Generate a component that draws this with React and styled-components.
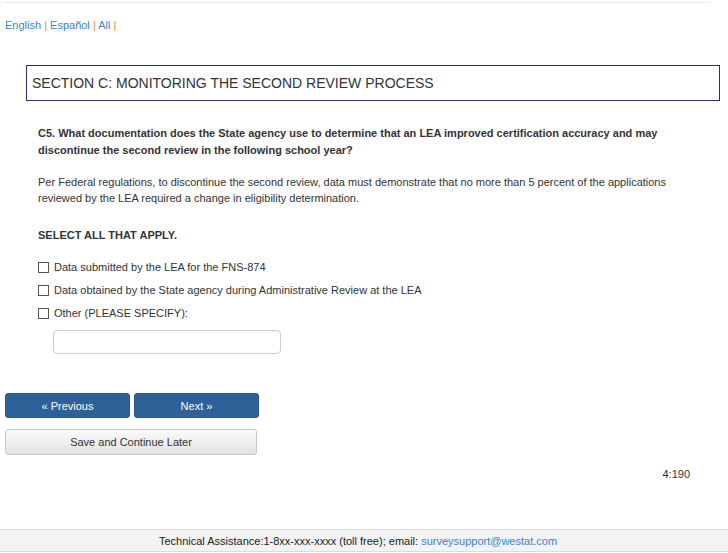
import React from "react";
import styled, { createGlobalStyle } from "styled-components";

const Global = createGlobalStyle`
  html, body { margin: 0; padding: 0; background: #fff; }
  body { font-family: "Liberation Sans", Arial, sans-serif; color: #333; font-size: 11px; }
`;

const Page = styled.div`
  width: 728px;
  height: 553px;
  display: flex;
  flex-direction: column;
  position: relative;
`;

const TopRule = styled.div`
  margin: 2px 18px 0 3px;
  height: 1px;
  background: #e8e8e8;
`;

const LangBar = styled.div`
  padding: 15px 5px 0;
  font-size: 11px;
  line-height: 14px;
  color: #e08a2e;
`;

const LangLink = styled.a`
  color: #3c82c9;
  text-decoration: none;
`;

const Content = styled.div`
  padding: 0 0 0 5px;
  flex: 1;
`;

const SectionBox = styled.div`
  margin: 33px 8px 0 21px;
  height: 34px;
  border: 1px solid #2b2d6e;
  display: flex;
  align-items: center;
  padding-left: 5px;
  font-size: 14px;
  color: #333;
`;

const Body = styled.div`
  padding: 0 0 0 33px;
`;

const Question = styled.p`
  margin: 24px 40px 0 0;
  font-weight: bold;
  font-size: 11px;
  line-height: 17px;
  color: #333;
`;

const Note = styled.p`
  margin: 15px 40px 0 0;
  font-size: 11px;
  line-height: 16px;
  color: #333;
`;

const SelectAll = styled.p`
  margin: 22px 0 0 0;
  font-weight: bold;
  font-size: 11px;
  line-height: 14px;
`;

const Options = styled.div`
  margin-top: 18px;
  display: flex;
  flex-direction: column;
  gap: 9px;
`;

const Option = styled.label`
  display: flex;
  align-items: center;
  gap: 5px;
  font-size: 11px;
  line-height: 14px;
`;

const Box = styled.span`
  width: 9px;
  height: 9px;
  border: 1px solid #555;
  background: #fff;
  display: inline-block;
`;

const SpecifyInput = styled.div`
  margin: 10px 0 0 15px;
  width: 226px;
  height: 22px;
  border: 1px solid #ccc;
  border-radius: 4px;
  background: #fff;
`;

const ButtonRow = styled.div`
  margin-top: 39px;
  display: flex;
  gap: 4px;
`;

const BlueButton = styled.div`
  width: 125px;
  height: 25px;
  box-sizing: border-box;
  background: #2d6198;
  border: 1px solid #28578a;
  border-radius: 3px;
  color: #fff;
  font-size: 11px;
  display: flex;
  align-items: center;
  justify-content: center;
`;

const SaveButton = styled.div`
  margin-top: 11px;
  width: 252px;
  height: 26px;
  box-sizing: border-box;
  border: 1px solid #c8c8c8;
  border-radius: 3px;
  background: linear-gradient(#fbfbfb, #e2e2e2);
  color: #333;
  font-size: 11px;
  display: flex;
  align-items: center;
  justify-content: center;
`;

const PageNum = styled.div`
  margin: 12px 38px 0 0;
  text-align: right;
  font-size: 11px;
  line-height: 14px;
`;

const Footer = styled.div`
  height: 21px;
  margin-bottom: 1px;
  background: #f3f3f3;
  border-top: 1px solid #dcdcdc;
  border-bottom: 1px solid #dcdcdc;
  display: flex;
  align-items: center;
  justify-content: center;
  font-size: 11px;
  color: #222;
  padding-right: 12px;
`;

const Mail = styled.a`
  color: #3c82c9;
  text-decoration: none;
`;

export default function App() {
  return (
    <>
      <Global />
      <Page>
        <TopRule />
        <LangBar>
          <LangLink>English</LangLink> | <LangLink>Español</LangLink> | <LangLink>All</LangLink> |
        </LangBar>
        <Content>
          <SectionBox>SECTION C: MONITORING THE SECOND REVIEW PROCESS</SectionBox>
          <Body>
            <Question>
              C5. What documentation does the State agency use to determine that an LEA improved certification accuracy and may discontinue the second review in the following school year?
            </Question>
            <Note>
              Per Federal regulations, to discontinue the second review, data must demonstrate that no more than 5 percent of the applications reviewed by the LEA required a change in eligibility determination.
            </Note>
            <SelectAll>SELECT ALL THAT APPLY.</SelectAll>
            <Options>
              <Option><Box />Data submitted by the LEA for the FNS-874</Option>
              <Option><Box />Data obtained by the State agency during Administrative Review at the LEA</Option>
              <Option><Box />Other (PLEASE SPECIFY):</Option>
            </Options>
            <SpecifyInput />
          </Body>
          <ButtonRow>
            <BlueButton>« Previous</BlueButton>
            <BlueButton>Next »</BlueButton>
          </ButtonRow>
          <SaveButton>Save and Continue Later</SaveButton>
          <PageNum>4:190</PageNum>
        </Content>
        <Footer>
          Technical Assistance:1-8xx-xxx-xxxx (toll free); email:&nbsp;<Mail>surveysupport@westat.com</Mail>
        </Footer>
      </Page>
    </>
  );
}
